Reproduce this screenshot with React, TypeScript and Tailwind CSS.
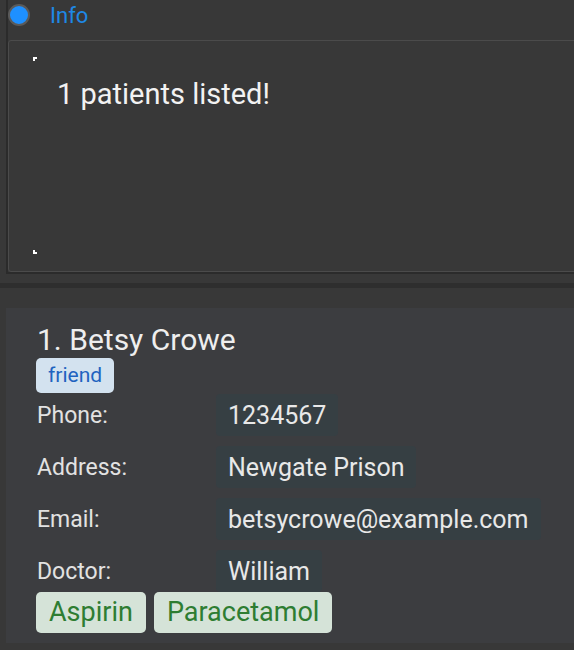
import React from 'react';

const fields = [
  { label: 'Phone:', value: '1234567' },
  { label: 'Address:', value: 'Newgate Prison' },
  { label: 'Email:', value: 'betsycrowe@example.com' },
  { label: 'Doctor:', value: 'William' },
];

const medicines = ['Aspirin', 'Paracetamol'];

export default function App() {
  return (
    <div
      className="flex h-[650px] w-[574px] flex-col overflow-hidden bg-[#383838]"
      style={{ fontFamily: 'Roboto, "Liberation Sans", sans-serif' }}
    >
      {/* result display pane */}
      <div className="ml-[6px] flex h-[274px] shrink-0 flex-col border-b-2 border-l-2 border-[#2b2b2b]">
        <div className="flex h-[40px] shrink-0 items-start pt-[4px]">
          <div className="h-[22px] w-[22px] rounded-full border-2 border-[#5a5a5a] bg-[#1e90ff]" />
          <span className="ml-[20px] text-[22px] leading-[24px] text-[#1e88e5]">Info</span>
        </div>
        <div className="relative -mr-[8px] flex-1 rounded-[3px] border border-[#4b4b4b] bg-[#383838]">
          <div className="absolute left-[24px] top-[16px] h-[4px] w-[4px] border-l-2 border-t-2 border-white" />
          <div className="absolute bottom-[17px] left-[24px] h-[4px] w-[4px] border-b-2 border-l-2 border-white" />
          <p className="pl-[48px] pt-[36px] text-[29px] leading-[34px] text-[#f2f2f2]">
            1 patients listed!
          </p>
        </div>
      </div>

      {/* split divider */}
      <div className="mt-[9px] h-[5px] shrink-0 bg-[#2e2e2e]" />

      {/* patient card */}
      <div className="ml-[6px] mt-[20px] flex h-[335px] shrink-0 flex-col bg-[#3c3d40] pl-[30px] pt-[14px]">
        <div className="pl-[1px] text-[30px] leading-[36px] text-[#eeeeee]">1. Betsy Crowe</div>
        <div className="flex">
          <span className="h-[35px] rounded-[5px] bg-[#d3e2ef] px-[12px] text-[21px] leading-[35px] text-[#1f63c0]">
            friend
          </span>
        </div>
        <div className="mt-[1px] flex flex-col gap-[10px]">
          {fields.map((f) => (
            <div key={f.label} className="flex h-[42px] items-center">
              <span className="w-[180px] shrink-0 pl-[1px] pt-[2px] text-[23px] leading-[40px] text-[#e2e2e2]">
                {f.label}
              </span>
              <span className="h-[42px] rounded-[4px] bg-[#363f43] px-[12px] pt-[2px] text-[25px] leading-[40px] text-[#e8e8e8]">
                {f.value}
              </span>
            </div>
          ))}
        </div>
        <div className="flex gap-[8px]">
          {medicines.map((m) => (
            <span
              key={m}
              className="h-[41px] rounded-[5px] bg-[#d5e3d8] px-[13px] text-[27px] leading-[41px] text-[#2e7d32]"
            >
              {m}
            </span>
          ))}
        </div>
      </div>
    </div>
  );
}
